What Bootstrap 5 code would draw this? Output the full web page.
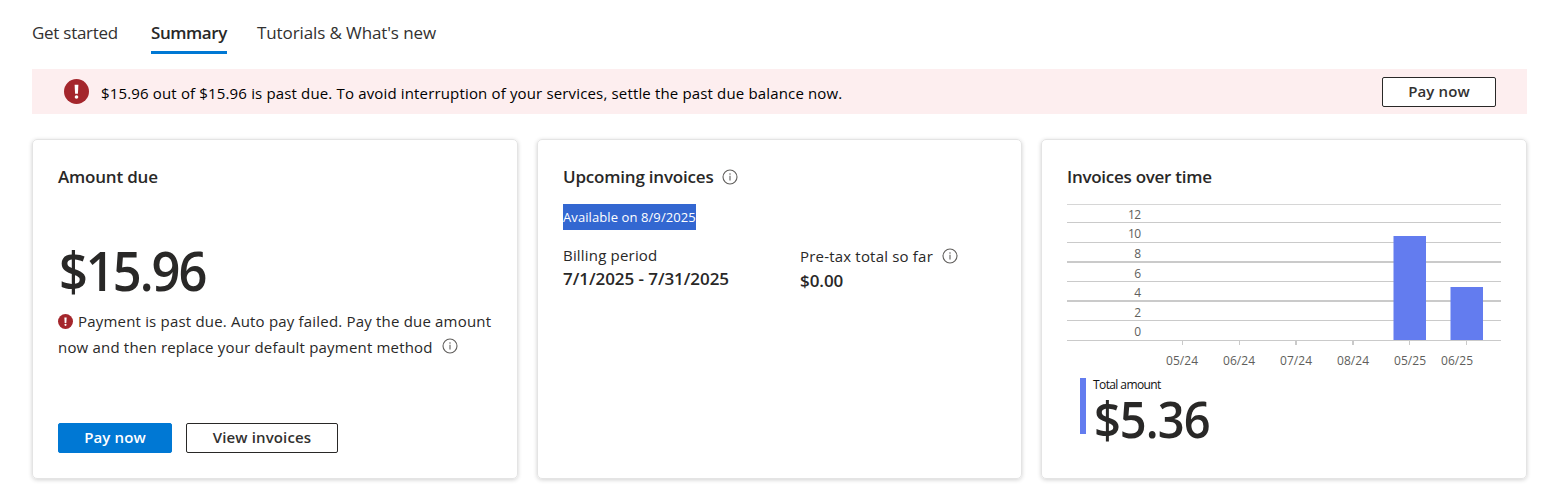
<!DOCTYPE html>
<html lang="en">
<head>
<meta charset="utf-8">
<meta name="viewport" content="width=device-width, initial-scale=1">
<title>Billing summary</title>
<link href="https://cdn.jsdelivr.net/npm/bootstrap@5.3.0/dist/css/bootstrap.min.css" rel="stylesheet">
<style>
  body { font-family: "Open Sans", "Noto Sans", sans-serif; color: #292827; background: #fff; }
  .page { padding: 20px 31px 0 32px; min-height: 493px; }
  .tabs { height: 49px; font-size: 17px; line-height: 26px; }
  .tabs a { color: #323130; text-decoration: none; height: 34px; white-space: nowrap; }
  .tabs a.active { font-weight: 600; color: #292827; border-bottom: 3px solid #0078d4; letter-spacing: -.43px; }
  .t1 { width: 86px; margin-right: 33px; letter-spacing: -.27px; }
  .t2 { width: 76px; margin-right: 30px; }
  .t3 { letter-spacing: -.11px; }
  .past-due { height: 45px; background: #fdeeef; padding: 0 31px 0 32px; color: #000; font-size: 15px; }
  .notice { letter-spacing: .155px; margin-left: 12px; padding-top: 3px; }
  .btn-box { height: 30px; border-radius: 2px; border: 1px solid #292827; background: #fff; color: #323130; font-size: 15px; font-weight: 600; line-height: 18px; padding: 4px 0 6px; letter-spacing: .13px; }
  .btn-box.main { background: #0078d4; border-color: #0078d4; color: #fff; }
  .w-pay { width: 114px; }
  .w-view { width: 152px; }
  .tiles { grid-template-columns: 486fr 485fr 486fr; gap: 19px; margin-top: 25px; }
  .tile { height: 340px; border: 1px solid #e4e4e4; border-radius: 5px; box-shadow: 0 1px 4px rgba(0,0,0,.18); padding: 25px; }
  .tile h2 { font-size: 17px; font-weight: 600; line-height: 24px; margin: 0; white-space: nowrap; letter-spacing: -.2px; }
  .tile h2.h-time { letter-spacing: -.27px; }
  .big { font-size: 55px; line-height: 60px; font-weight: 600; margin-top: 51px; padding-left: 1px; letter-spacing: -2.2px; transform: scaleX(.92); transform-origin: 0 0; }
  .msg { font-size: 15px; line-height: 26px; margin-top: 8px; white-space: nowrap; letter-spacing: .19px; }
  .warn { margin-right: 5px; }
  .actions { gap: 14px; margin-top: 63px; }
  .picked { font-size: 13px; line-height: 27px; height: 26px; width: 133px; background: #3367d1; color: #fff; margin-top: 15px; white-space: nowrap; letter-spacing: .09px; }
  .period { width: 237px; }
  .facts { margin-top: 14px; }
  .pretax { padding-top: 1px; }
  .pretax .v { padding-top: 1px; }
  .k { font-size: 15px; line-height: 23px; white-space: nowrap; letter-spacing: .19px; }
  .v { font-size: 17px; font-weight: 600; line-height: 24px; white-space: nowrap; letter-spacing: -.06px; }
  .info-gap { margin-left: 9px; }
  .chart { display: block; margin-top: 15px; font-size: 12px; fill: #605e5c; }
  .total { margin: 4px 0 0 13px; border-left: 6px solid #637cef; height: 56px; padding-left: 7px; }
  .total-k { font-size: 12px; line-height: 13px; white-space: nowrap; letter-spacing: -.6px; color: #111; }
  .total-v { font-size: 50px; font-weight: 600; line-height: 56px; padding-left: 1px; letter-spacing: -1px; transform: scaleX(.94); transform-origin: 0 0; }
  .raise { transform: translateY(-1px); }
</style>
</head>
<body>
<svg class="d-none">
  <symbol id="err" viewBox="0 0 25 25"><circle cx="12.5" cy="12.5" r="12.5" fill="#a4262c"/><path d="M10.6 5.8h3.8l-.5 9h-2.8z" fill="#fff"/><circle cx="12.5" cy="18" r="1.8" fill="#fff"/></symbol>
  <symbol id="info" viewBox="0 0 16 16"><circle cx="8" cy="8" r="7" fill="none" stroke="#605e5c" stroke-width="1.1"/><path d="M8 6.8v4.6" stroke="#605e5c" stroke-width="1.1"/><circle cx="8" cy="4.9" r=".75" fill="#605e5c"/></symbol>
</svg>
<main class="page">
  <nav class="tabs d-flex">
    <a href="#" class="t1">Get started</a>
    <a href="#" class="t2 active">Summary</a>
    <a href="#" class="t3">Tutorials &amp; What's new</a>
  </nav>
  <div class="past-due d-flex align-items-center">
    <svg width="25" height="25" class="flex-shrink-0"><use href="#err"/></svg>
    <span class="notice text-nowrap">$15.96 out of $15.96 is past due. To avoid interruption of your services, settle the past due balance now.</span>
    <button class="btn btn-box w-pay ms-auto">Pay now</button>
  </div>
  <div class="tiles d-grid">
    <section class="tile">
      <h2>Amount due</h2>
      <div class="big">$15.96</div>
      <div class="msg">
        <div class="d-flex align-items-center"><svg width="15" height="15" class="warn"><use href="#err"/></svg><span>Payment is past due. Auto pay failed. Pay the due amount</span></div>
        <div class="d-flex align-items-center"><span>now and then replace your default payment method</span><svg width="16" height="16" class="info-gap raise"><use href="#info"/></svg></div>
      </div>
      <div class="actions d-flex">
        <button class="btn btn-box main w-pay">Pay now</button>
        <button class="btn btn-box w-view">View invoices</button>
      </div>
    </section>
    <section class="tile">
      <h2 class="d-flex align-items-center"><span>Upcoming invoices</span><svg width="16" height="16" class="info-gap"><use href="#info"/></svg></h2>
      <div class="picked">Available on 8/9/2025</div>
      <div class="facts d-flex">
        <div class="period"><div class="k">Billing period</div><div class="v">7/1/2025 - 7/31/2025</div></div>
        <div class="pretax"><div class="k d-flex align-items-center"><span>Pre-tax total so far</span><svg width="16" height="16" class="info-gap raise"><use href="#info"/></svg></div><div class="v">$0.00</div></div>
      </div>
    </section>
    <section class="tile">
      <h2 class="h-time">Invoices over time</h2>
      <svg class="chart" width="434" height="170" viewBox="0 0 434 170">
        <g fill="#cacaca" shape-rendering="crispEdges">
          <path fill="#d6d6d6" d="M0 0h434v1H0z"/>
          <path d="M0 18h434v1H0zM0 38h434v1H0zM0 57h434v2H0zM0 77h434v1H0zM0 96h434v2H0zM0 116h434v1H0zM0 136h434v1H0z"/>
          <path d="M115 137h1v4h-1zM172 137h1v4h-1zM228 137h2v4h-2zM285 137h2v4h-2zM342 137h1v4h-1zM399 137h1v4h-1z"/>
        </g>
        <path fill="#637cef" d="M326.500 32H359v104h-32.500zM383.500 83H416v53h-32.500z"/>
        <g text-anchor="end">
          <text x="74" y="15" textLength="13">12</text><text x="74" y="34" textLength="13">10</text>
          <text x="74" y="54">8</text><text x="74" y="74">6</text><text x="74" y="93">4</text><text x="74" y="113">2</text><text x="74" y="132">0</text>
        </g>
        <g>
          <text x="99" y="161" textLength="32">05/24</text><text x="156" y="161" textLength="32">06/24</text><text x="213" y="161" textLength="32">07/24</text><text x="270" y="161" textLength="32">08/24</text><text x="327" y="161" textLength="32">05/25</text><text x="374" y="161" textLength="32">06/25</text>
        </g>
      </svg>
      <div class="total"><div class="total-k">Total amount</div><div class="total-v">$5.36</div></div>
    </section>
  </div>
</main>
<script src="https://cdn.jsdelivr.net/npm/bootstrap@5.3.0/dist/js/bootstrap.bundle.min.js"></script>
</body>
</html>
